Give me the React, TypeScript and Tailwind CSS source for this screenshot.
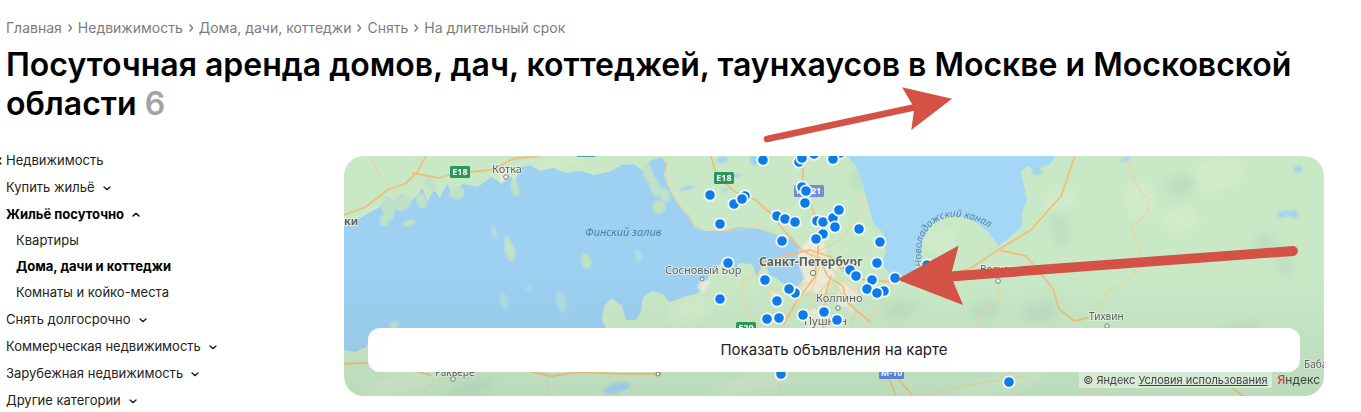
const crumbs = ['Главная', 'Недвижимость', 'Дома, дачи, коттеджи', 'Снять', 'На длительный срок'];

const pins: [number, number][] = [
  [763, 160], [799, 162], [802, 158], [814, 154], [840, 153], [833, 159], [710, 195], [745, 196],
  [734, 204], [742, 199], [720, 224], [802, 187], [806, 191], [805, 203], [777, 216], [785, 219],
  [795, 222], [817, 221], [823, 222], [833, 218], [839, 210], [835, 227], [823, 234], [816, 239],
  [859, 229], [880, 242], [782, 241], [877, 263], [728, 263], [765, 280], [850, 270], [856, 276],
  [872, 280], [895, 278], [867, 289], [884, 291], [877, 293], [795, 293], [789, 289], [777, 301],
  [720, 299], [767, 319], [779, 318], [803, 315], [824, 312], [837, 320], [927, 265], [1009, 382],
  [781, 374],
];

const islands = [
  [388, 208, 6, 12], [402, 203, 9, 8], [409, 223, 7, 3], [422, 201, 5, 8], [384, 221, 4, 6],
  [457, 193, 8, 6], [515, 188, 4, 9], [510, 251, 5, 11], [508, 244, 3, 9], [586, 261, 5, 8],
  [394, 325, 4, 4], [659, 207, 7, 7], [655, 187, 5, 10], [648, 173, 5, 10], [665, 195, 5, 7],
  [430, 183, 4, 9],
];

const shoals = [[529, 289, 3, 3], [561, 302, 5, 11], [504, 301, 4, 8], [638, 256, 4, 7], [494, 232, 3, 8]];

const lakes = [
  [722, 160, 6, 3], [687, 188, 8, 2], [725, 190, 3, 2], [754, 160, 4, 6], [617, 388, 14, 5],
  [1126, 159, 5, 2], [1298, 169, 5, 3], [1284, 214, 7, 3], [1294, 214, 4, 4], [735, 176, 6, 2],
  [1037, 172, 5, 3],
];

const meadows = [
  [1215, 175, 28, 16], [1180, 220, 20, 12], [1140, 200, 14, 20], [1060, 200, 18, 10], [940, 240, 16, 12],
  [750, 385, 40, 8], [1000, 385, 50, 8], [400, 385, 40, 9], [560, 162, 30, 5], [690, 310, 24, 12],
];

const groves = [
  [1060, 230, 8, 18], [1265, 245, 10, 12], [1284, 262, 7, 16], [1180, 185, 16, 10], [985, 310, 14, 8],
  [1040, 312, 18, 10], [900, 310, 16, 8], [860, 180, 10, 9], [1240, 330, 22, 6], [470, 388, 24, 7],
];

function Ellipses({ items, className, blur = 'url(#soft)' }: { items: number[][]; className: string; blur?: string }) {
  return (
    <g className={className} filter={blur}>
      {items.map(([cx, cy, rx, ry]) => (
        <ellipse key={`${cx}-${cy}`} cx={cx} cy={cy} rx={rx} ry={ry} transform={`rotate(-14 ${cx} ${cy})`} />
      ))}
    </g>
  );
}

function RoadSign({ x, y, label, className, width = 20 }: { x: number; y: number; label: string; className: string; width?: number }) {
  return (
    <g>
      <rect x={x} y={y} width={width} height="12" rx="1.5" className={className} />
      <text x={x + width / 2} y={y + 9} textAnchor="middle" className="fill-white text-[9px] font-bold">{label}</text>
    </g>
  );
}

function RegionMap() {
  return (
    <svg
      viewBox="344 156 980 240"
      preserveAspectRatio="xMidYMid slice"
      className="block size-full font-['Noto_Sans',sans-serif]"
      role="img"
      aria-label="Карта объявлений"
    >
      <defs>
        <filter id="soft" x="-5%" y="-5%" width="110%" height="110%"><feGaussianBlur stdDeviation="1.2" /></filter>
        <filter id="softer" x="-10%" y="-10%" width="120%" height="120%"><feGaussianBlur stdDeviation="5" /></filter>
        <filter id="coast" x="-2%" y="-2%" width="104%" height="104%"><feGaussianBlur stdDeviation="0.6" /></filter>
        <linearGradient id="shade" x1="0" y1="0" x2="0" y2="1">
          <stop offset="0.5" stopColor="#5a7f70" stopOpacity="0" />
          <stop offset="1" stopColor="#5a7f70" stopOpacity="0.12" />
        </linearGradient>
        <path id="canal" d="M923 266C917 241 927 225 943 219C963 212 985 224 1008 238" />
      </defs>
      <rect x="344" y="156" width="980" height="240" fill="#c9e8c6" />
      <Ellipses items={meadows} className="fill-[#d1ebca]" blur="url(#softer)" />
      <Ellipses items={groves} className="fill-[#bcdec1]" blur="url(#softer)" />

      <g filter="url(#coast)">
        <path
          fill="#9dd0f1"
          d="M340 227L357 220L369 213L380 207L386 196L393 202L402 194L408 203L417 196L422 188L428 201L434 190L440 198L447 184L452 193L463 184L478 187L491 177L501 183L509 174L515 184L519 168L530 165L540 171L553 168L565 173L580 171L594 175L609 172L622 165L634 164L643 171L650 161L661 157L667 164L664 175L671 192L681 207L690 216L692 224L704 231L722 231L740 227L759 229L777 235L791 239L801 250L798 258L781 262L764 263L757 277L752 264L739 263L735 270L721 263L711 270L707 280L698 293L684 297L669 302L663 294L652 291L643 297L641 311L636 320L626 320L622 306L612 298L604 306L602 320L606 328L590 340L396 340L389 328L374 333L366 347L355 352L340 349Z"
        />
        <path fill="#9dd0f1" d="M767 265L790 262L803 265L805 278L797 286L784 284L776 278L769 275Z" />
        <path
          fill="#a4d6f5"
          d="M847 152L847 156L856 166L862 181L867 200L873 223L884 234L886 252L882 263L890 274L904 278L914 271L921 253L923 238L931 225L945 216L960 216L976 222L989 233L999 246L1010 237L1022 226L1022 212L1027 200L1023 181L1021 171L1029 166L1036 174L1042 166L1050 165L1057 152Z"
        />
      </g>
      <Ellipses items={islands} className="fill-[#bfe2c6]" />
      <Ellipses items={shoals} className="fill-[#afdbe6]" />
      <Ellipses items={lakes} className="fill-[#a4d3ef]" />

      <g fill="#f0e9da" opacity="0.9" filter="url(#soft)">
        <path d="M798 251L811 237L824 242L827 257L839 263L832 281L824 297L810 290L799 296L804 278L798 263Z" />
        <path d="M840 282L852 284L860 297L849 308L836 305ZM799 315L822 305L835 327L808 328ZM700 280L711 281L704 292L697 288ZM498 170L507 167L510 177L501 184ZM768 291L780 295L775 305ZM848 309L855 306L852 314Z" />
      </g>

      <g fill="none" stroke="#ecd49c" strokeWidth="1.2" strokeLinecap="round" strokeLinejoin="round">
        <path d="M369 156L382 178L391 191M667 156L666 180L676 201L690 218L696 229L730 231L759 226L787 238" />
        <path d="M755 274L743 280L741 300L753 322L758 328M781 328L798 304L812 290L819 269L813 250M820 267L810 282L790 290M827 263L844 282L855 291M816 252L841 240L867 205L858 196" />
        <path d="M824 293L825 328M830 280L818 294L793 296L765 285M832 282L856 311L850 328M764 263L756 278L770 294L781 307M811 303L826 316L848 323" />
        <path d="M1125 159L1142 195L1149 198L1147 214L1132 226L1136 239L1142 249L1137 268L1128 281L1107 291L1100 309M999 280L999 300L981 315L978 328M895 282L884 300L866 322" />
        <path d="M1101 372L1086 388L1108 396M425 394L434 379M548 372L547 396M779 375L780 396M920 396L970 385L1026 376" />
      </g>
      <g fill="none" stroke="#efbf7c" strokeWidth="1.8" strokeLinecap="round" strokeLinejoin="round">
        <path d="M344 215L364 208L389 189L405 184L417 172L426 156M413 173L439 178L458 173L491 170L513 159L538 156" />
        <path d="M711 156L716 174L735 192L756 200L770 213L782 228L802 250L813 256M803 156L803 180L812 208L819 226L818 252L815 276" />
        <path d="M762 264L783 256L810 250L831 257L843 271L856 279L895 282L944 276L971 268L998 250L1031 230L1061 196L1075 156" />
        <path d="M999 250L1026 256L1041 274L1053 289L1059 309L1074 321L1088 318M819 257L828 277L843 286L846 301L870 322" />
        <path d="M344 364L378 362L430 375M532 372L552 376L580 372L621 374L661 374M886 372L896 395M899 380L912 395M1233 388L1243 396" />
        <path d="M815 277L798 299L784 323M831 276L825 296L823 328" />
      </g>

      <rect x="577" y="154" width="18" height="3" fill="#4d9eac" />
      <RoadSign x={450} y={166} label="E18" className="fill-[#27995d]" />
      <RoadSign x={714} y={172} label="E18" className="fill-[#27995d]" />
      <RoadSign x={736} y={322} label="E20" className="fill-[#27995d]" />
      <RoadSign x={794} y={185} label="А-121" width={30} className="fill-[#708fd5]" />
      <RoadSign x={879} y={367} label="М-10" width={25} className="fill-[#5781df]" />

      <g className="fill-[#5b605c] text-[11px]" stroke="#edf4e9" strokeWidth="1.5" paintOrder="stroke">
        <text x="492" y="173">Котка</text>
        <text x="665" y="274">Сосновый Бор</text>
        <text x="816" y="302">Колпино</text>
        <text x="804" y="325">Пушкин</text>
        <text x="1089" y="320" className="text-[10px]">Тихвин</text>
        <text x="1304" y="368" className="text-[10px]">Бабаево</text>
        <text x="435" y="376" className="text-[10px]">Раквере</text>
        <text x="980" y="273" className="text-[10px]">Волхов</text>
        <text x="344" y="225" className="text-[11px] font-bold">ки</text>
        <text x="759" y="266" className="text-[12px] font-bold">Санкт-Петербург</text>
      </g>
      <g fill="#f7faf4" stroke="#737970" strokeWidth="1">
        <circle cx="506" cy="177" r="2.3" /><circle cx="453" cy="379" r="2.3" /><circle cx="702" cy="279" r="2" />
        <circle cx="813" cy="273" r="2.6" /><circle cx="838" cy="308" r="2.2" /><circle cx="998" cy="281" r="2.4" />
        <circle cx="1107" cy="326" r="2.2" /><circle cx="658" cy="374" r="2" />
      </g>
      <text x="585" y="236" className="fill-[#4c7fae] text-[11px] italic">Финский залив</text>
      <text className="fill-[#5888ab] text-[10px] italic">
        <textPath href="#canal">Новоладожский канал</textPath>
      </text>

      <rect x="344" y="156" width="980" height="240" fill="url(#shade)" />
      <g fill="#0c7cea" stroke="#f1f9fb" strokeWidth="1.8">
        {pins.map(([cx, cy]) => <circle key={`${cx}-${cy}`} cx={cx} cy={cy} r="5.7" />)}
      </g>
    </svg>
  );
}

function Chevron({ className = '' }: { className?: string }) {
  return (
    <svg viewBox="0 0 8 8" className={`size-2 shrink-0 ${className}`} fill="none" stroke="currentColor" strokeWidth="1.4" strokeLinecap="round" strokeLinejoin="round" aria-hidden>
      <path d="M1 3L4 5.6L7 3" />
    </svg>
  );
}

function CategoryButton({ label, open = false }: { label: string; open?: boolean }) {
  return (
    <button
      type="button"
      aria-expanded={open}
      className={`flex h-[27px] items-center gap-2 whitespace-nowrap ${open ? 'font-bold text-black' : ''}`}
    >
      {label}
      <Chevron className={open ? 'rotate-180' : ''} />
    </button>
  );
}

function Annotations() {
  return (
    <svg className="pointer-events-none absolute top-0 left-0 h-[412px] w-[1361px]" viewBox="0 0 1361 412" fill="#d35145" aria-hidden>
      <path d="M767 139L916 107" stroke="#d35145" strokeWidth="6.6" strokeLinecap="round" />
      <path d="M952 98.7L902 87.3L912 104L914 110L911.3 130Z" />
      <path d="M1293 251L950 276.5" stroke="#d35145" strokeWidth="9.8" strokeLinecap="round" />
      <path d="M897 279.5L958.7 245.5L952 271L953 281L963 305Z" />
    </svg>
  );
}

export default function App() {
  return (
    <div className="relative overflow-hidden bg-white font-[Inter,sans-serif] text-black">
      <header className="px-1.5 pt-[18px]">
        <nav aria-label="Навигация" className="flex h-5 items-center gap-1 text-sm text-[#7c7c7c]">
          {crumbs.map((crumb, i) => (
            <span key={crumb} className="flex items-center gap-1 whitespace-nowrap">
              {i > 0 && <Chevron className="-rotate-90" />}
              <a href="#">{crumb}</a>
            </span>
          ))}
        </nav>
        <h1 className="mt-[7px] text-[32px] leading-[39px] font-semibold">
          Посуточная аренда домов, дач, коттеджей, таунхаусов в Москве и Московской области{' '}
          <span className="text-[#a3a3a3]">6</span>
        </h1>
      </header>

      <main className="mt-6 flex items-start">
        <aside className="w-[344px] shrink-0 pl-1.5 text-[13px] text-[#222222]">
          <a href="#" className="relative flex h-[27px] items-center">
            <Chevron className="absolute -left-2.5 rotate-90" />
            Недвижимость
          </a>
          <CategoryButton label="Купить жильё" />
          <CategoryButton label="Жильё посуточно" open />
          <ul className="pl-2.5">
            <li><a href="#" className="flex h-[26px] items-center">Квартиры</a></li>
            <li><a href="#" className="flex h-[26px] items-center font-bold text-black">Дома, дачи и коттеджи</a></li>
            <li><a href="#" className="flex h-[26px] items-center">Комнаты и койко-места</a></li>
          </ul>
          <CategoryButton label="Снять долгосрочно" />
          <CategoryButton label="Коммерческая недвижимость" />
          <CategoryButton label="Зарубежная недвижимость" />
          <CategoryButton label="Другие категории" />
        </aside>

        <section className="relative mt-[9px] mr-[37px] h-60 min-w-0 flex-1 overflow-hidden rounded-[20px]">
          <RegionMap />
          <button type="button" className="absolute inset-x-6 bottom-6 h-11 rounded-xl bg-white text-[15px] text-[#222222]">
            Показать объявления на карте
          </button>
          <div className="absolute right-1 bottom-2 flex h-4 items-center gap-1.5 text-[11px] text-[#444444]">
            <span className="bg-white/40 px-1 leading-4 whitespace-nowrap">
              © Яндекс <a href="#" className="underline">Условия использования</a>
            </span>
            <a href="#" className="text-xs"><span className="font-medium text-[#ff2a35]">Я</span>ндекс</a>
          </div>
        </section>
      </main>
      <Annotations />
    </div>
  );
}
